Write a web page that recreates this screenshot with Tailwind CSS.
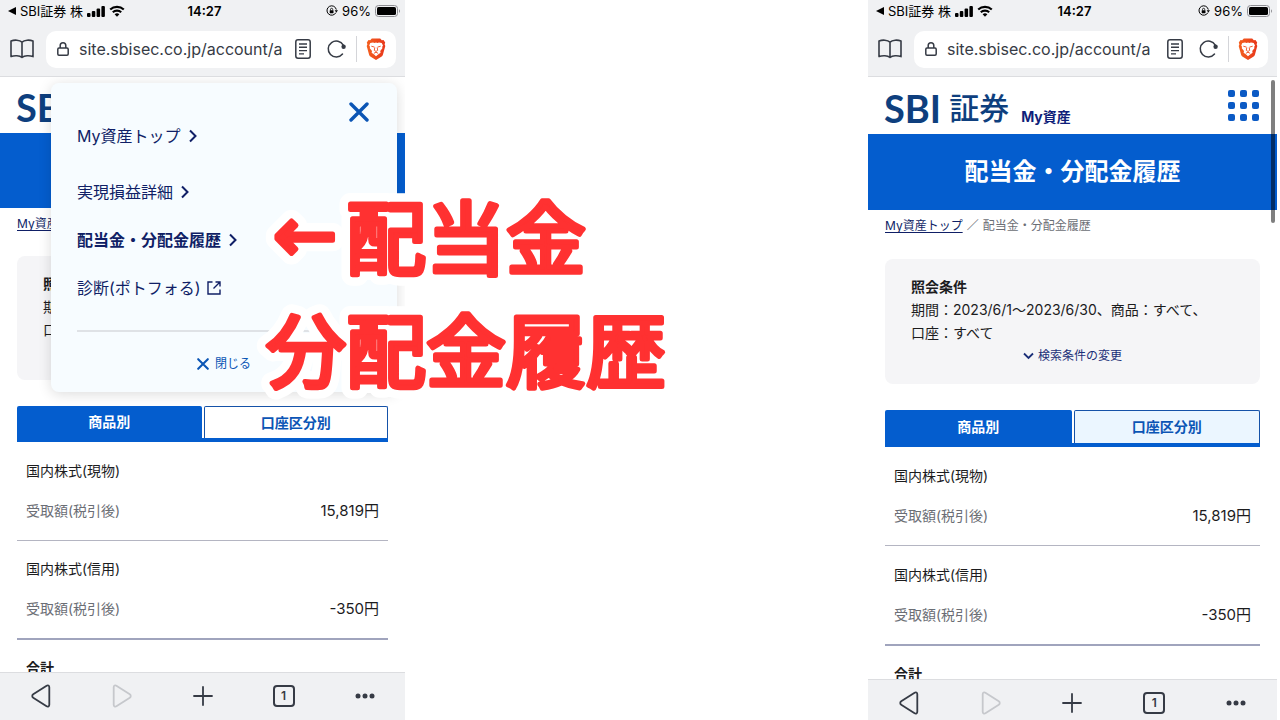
<!DOCTYPE html>
<html lang="ja">

<head>
  <meta charset="UTF-8">
  <meta name="viewport" content="width=device-width, initial-scale=1.0">
  <title>配当金・分配金履歴</title>
  <script src="https://cdn.jsdelivr.net/npm/@tailwindcss/browser@4"></script>
</head>

<body class="font-[Inter,'Noto_Sans_CJK_JP',sans-serif] bg-white text-[#1c1c1e]">
  <!-- Shared icons -->
  <svg class="absolute w-0 h-0" aria-hidden="true">
    <linearGradient id="flame" x1="0" y1="0" x2="1" y2="0">
      <stop offset="0" stop-color="#f4601f" />
      <stop offset="1" stop-color="#e8371b" />
    </linearGradient>
    <symbol id="signal" viewBox="0 0 18 11">
      <rect x="0" y="7" width="3.500" height="4" rx="1" />
      <rect x="4.800" y="5" width="3.500" height="6" rx="1" />
      <rect x="9.600" y="2.500" width="3.500" height="8.500" rx="1" />
      <rect x="14.400" y="0" width="3.500" height="11" rx="1" />
    </symbol>
    <symbol id="wifi" viewBox="0 0 16 12">
      <path d="M1.2 4.6a9.8 9.8 0 0 1 13.6 0M3.8 7.3a6 6 0 0 1 8.4 0" fill="none" stroke="currentColor" stroke-width="2.1" />
      <path d="M5.6 9.3a3.5 3.5 0 0 1 4.8 0L8 11.8z" />
    </symbol>
    <symbol id="rotation" viewBox="0 0 12 12">
      <path d="M9.9 7.6A4.7 4.7 0 1 1 10.3 4.6" fill="none" stroke="currentColor" stroke-width="1" />
      <path d="M8.600 5.200h3.400l-1.700 2.300z" />
      <rect x="3.700" y="5.200" width="3.800" height="3" rx=".4" />
      <path d="M4.500 5.300V4.400a1.100 1.100 0 0 1 2.200 0v.9" fill="none" stroke="currentColor" stroke-width=".8" />
    </symbol>
    <symbol id="battery" viewBox="0 0 26 12">
      <rect x=".5" y=".5" width="22" height="11" rx="3" fill="none" stroke="#8e8e93" />
      <rect x="2" y="2" width="19" height="8" rx="1.600" />
      <path d="M24 4.200c1.300.5 1.300 3.100 0 3.600z" fill="#8e8e93" />
    </symbol>
    <symbol id="book" viewBox="0 0 24 20">
      <path d="M12 3.200C9.500.8 4.500.6 1 2v15.600c3.500-1.400 8.500-1.200 11 .9 2.500-2.100 7.500-2.300 11-.9V2C19.500.6 14.500.8 12 3.200zV18.500" fill="none" stroke="currentColor" stroke-width="1.600" stroke-linejoin="round" />
    </symbol>
    <symbol id="lock" viewBox="0 0 12 14">
      <rect x=".8" y="6" width="10.400" height="7.200" rx="1.200" fill="none" stroke="currentColor" stroke-width="1.500" />
      <path d="M3.200 6V3.600a2.800 2.800 0 0 1 5.600 0V6" fill="none" stroke="currentColor" stroke-width="1.500" />
    </symbol>
    <symbol id="reader" viewBox="0 0 16 20">
      <rect x=".8" y=".8" width="14.400" height="18.400" rx="2.200" fill="none" stroke="currentColor" stroke-width="1.500" />
      <path d="M4 5h8M4 8.300h8M4 11.600h8M4 14.900h5" stroke="currentColor" stroke-width="1.400" />
    </symbol>
    <symbol id="reload" viewBox="0 0 20 20">
      <path d="M15.500 15A8 8 0 1 1 16.300 6.200" fill="none" stroke="currentColor" stroke-width="1.500" stroke-linecap="round" />
      <circle cx="16.600" cy="7.800" r="2.200" />
    </symbol>
    <symbol id="brave" viewBox="0 0 20 22">
      <path d="M5.800.5h8.400l1.600 1.700 1.700-.2L19.200 4.500l-.6 1.700.7 1.900-2.400 8.600c-.3 1-.8 1.600-1.600 2.100L10 22l-5.300-3.200c-.8-.5-1.300-1.100-1.600-2.100L.7 8.100l.7-1.900-.6-1.700L2.500 2l1.700.2z" fill="url(#flame)" />
      <path d="M4.300 5 7 4.600l1.600.4L10 4.500l1.400.5 1.600-.4 2.700.4 1.300 2.500-.8 1.200.2 1.600-2.200 2.700.4 1.800-2.500 1.700L10 18.200l-1.900-1.700-2.500-1.700.4-1.800-2.200-2.700.2-1.600-.8-1.200z" fill="#fff" />
      <path d="m5.300 8.200 3.200.9M14.700 8.200l-3.200.9M8.800 9.500l-.5 2.800L10 13.500l1.700-1.200-.5-2.800M7.900 15.300l2.100-1.100 2.100 1.100" fill="none" stroke="#ee4a1d" stroke-width=".9" />
    </symbol>
    <symbol id="back" viewBox="0 0 20 24">
      <path d="M15.600 1.700 2.200 10.300a2 2 0 0 0 0 3.400L15.600 22.300c1.300.8 2.700.1 2.700-1.500V3.200c0-1.600-1.400-2.300-2.700-1.500z" fill="none" stroke="currentColor" stroke-width="1.800" stroke-linejoin="round" />
    </symbol>
    <symbol id="plus" viewBox="0 0 20 20">
      <path d="M10 1v18M1 10h18" stroke="currentColor" stroke-width="1.800" stroke-linecap="round" />
    </symbol>
    <symbol id="dots" viewBox="0 0 20 6">
      <circle cx="3" cy="3" r="2.500" />
      <circle cx="10" cy="3" r="2.500" />
      <circle cx="17" cy="3" r="2.500" />
    </symbol>
    <symbol id="cross" viewBox="0 0 20 20">
      <path d="m2 2 16 16M18 2 2 18" stroke="currentColor" stroke-width="3.400" stroke-linecap="round" />
    </symbol>
    <symbol id="chevron" viewBox="0 0 8 14">
      <path d="m1 1.500 5.500 5.500L1 12.500" fill="none" stroke="currentColor" stroke-width="2" />
    </symbol>
    <symbol id="external" viewBox="0 0 14 14">
      <path d="M5.500 1H1v12h12V8.500M8.500 1H13v4.500M13 1 6.500 7.500" fill="none" stroke="currentColor" stroke-width="1.400" />
    </symbol>
    <symbol id="menu" viewBox="0 0 32 32">
      <rect x="0" y="0" width="7" height="7" rx="2" /><rect x="12" y="0" width="7" height="7" rx="2" /><rect x="24" y="0" width="7" height="7" rx="2" />
      <rect x="0" y="12" width="7" height="7" rx="2" /><rect x="12" y="12" width="7" height="7" rx="2" /><rect x="24" y="12" width="7" height="7" rx="2" />
      <rect x="0" y="24" width="7" height="7" rx="2" /><rect x="12" y="24" width="7" height="7" rx="2" /><rect x="24" y="24" width="7" height="7" rx="2" />
    </symbol>
  </svg>

  <div class="relative grid grid-cols-[405fr_463fr_409fr_3fr] h-screen overflow-hidden">

    <!-- Phone with the menu open -->
    <section class="flex flex-col min-w-0 min-h-0">
      <header class="bg-[#f0f1f3] border-b border-[#dcdde0] text-[#363b45]">
        <div class="grid grid-cols-[1fr_auto_1fr] items-center h-[22px] pl-2 pr-1 text-[13px] leading-5 text-black fill-current">
          <div class="flex items-center gap-1">
            <svg class="w-2 h-2" viewBox="0 0 8 8"><path d="M8 0v8L0 4z" /></svg>
            <span class="whitespace-nowrap">SBI証券 株</span>
            <svg class="w-[18px] h-[11px]"><use href="#signal" /></svg>
            <svg class="w-4 h-3"><use href="#wifi" /></svg>
          </div>
          <span class="font-semibold">14:27</span>
          <div class="flex items-center justify-end gap-1">
            <svg class="w-3 h-3"><use href="#rotation" /></svg>
            <span>96%</span>
            <svg class="w-[26px] h-3"><use href="#battery" /></svg>
          </div>
        </div>
        <div class="flex items-center gap-3 h-[54px] pl-[10px] pr-[9px]">
          <button aria-label="ブックマーク"><svg class="block w-6 h-5"><use href="#book" /></svg></button>
          <div class="flex flex-1 min-w-0 items-center h-[37px] rounded-[10px] bg-white pl-[11px] pr-[10px] fill-current">
            <svg class="shrink-0 w-3 h-[14px]"><use href="#lock" /></svg>
            <input aria-label="アドレス" value="site.sbisec.co.jp/account/assets" class="flex-1 min-w-0 ml-[10px] mr-3 text-base outline-none">
            <button aria-label="リーダー"><svg class="block w-4 h-5"><use href="#reader" /></svg></button>
            <button aria-label="再読み込み" class="ml-4"><svg class="block w-5 h-5"><use href="#reload" /></svg></button>
            <span class="w-px h-[26px] bg-[#d4d5d9] mx-[9px]"></span>
            <button aria-label="Brave"><svg class="block w-5 h-[22px]"><use href="#brave" /></svg></button>
          </div>
        </div>
      </header>

      <main class="relative flex-1 min-h-0 overflow-hidden">
        <div class="flex h-14 items-center pl-4">
          <div class="flex items-center gap-2 pt-1 text-[#0e3f7e]">
            <span class="font-[Lato] font-bold text-[38px] leading-none">SBI</span>
            <span class="font-medium text-[30px] leading-none">証券</span>
          </div>
        </div>
        <h1 class="h-[75px] bg-[#045dce] text-white font-bold text-2xl leading-[75px] text-center">配当金・分配金履歴</h1>
        <div class="px-[17px]">
          <p class="h-12 pt-[7px] text-xs leading-[18px]"><a href="#" class="text-[#0f1f66] underline underline-offset-2">My資産トップ</a></p>
          <div class="h-[124px] rounded-lg bg-[#f5f5f7] px-[26px] pt-4 text-sm leading-[23px]">
            <h2 class="font-bold">照会条件</h2>
            <p>期間：2023/6/1～2023/6/30、商品：すべて、</p>
            <p>口座：すべて</p>
          </div>
          <div class="grid grid-cols-2 gap-[2px] h-9 mt-[26px] border-b-4 border-[#045dce] text-sm font-bold">
            <button class="rounded-t-[2px] bg-[#045dce] text-white">商品別</button>
            <button class="rounded-t-[2px] border border-b-0 border-[#1552a8] text-[#0b55b5]">口座区分別</button>
          </div>
          <dl class="text-sm leading-6">
            <div class="border-b border-[#b4b5c2] px-[9px] py-[17px]">
              <dt>国内株式(現物)</dt>
              <dd class="flex justify-between mt-4"><span class="text-[#6b6e75]">受取額(税引後)</span><span class="text-[15px]">15,819円</span></dd>
            </div>
            <div class="border-b-2 border-[#a0a4bd] px-[9px] pt-4 pb-[17px]">
              <dt>国内株式(信用)</dt>
              <dd class="flex justify-between mt-4"><span class="text-[#6b6e75]">受取額(税引後)</span><span class="text-[15px]">-350円</span></dd>
            </div>
            <div class="px-[9px] pt-4">
              <dt class="font-bold">合計</dt>
            </div>
          </dl>
        </div>

        <!-- Menu over the page -->
        <nav class="absolute top-[6px] left-[51px] right-2 h-[309px] rounded-lg bg-[#f7fcff] shadow-[0_2px_14px_rgba(0,0,0,0.14)] px-[26px] pt-[41px] text-base leading-6 text-[#101f66]">
          <button aria-label="メニューを閉じる" class="absolute top-[19px] right-7 text-[#0b55b5]"><svg class="block w-5 h-5"><use href="#cross" /></svg></button>
          <a href="#" class="flex items-center gap-2">My資産トップ<svg class="w-2 h-[14px]"><use href="#chevron" /></svg></a>
          <a href="#" class="flex items-center gap-2 mt-8">実現損益詳細<svg class="w-2 h-[14px]"><use href="#chevron" /></svg></a>
          <a href="#" class="flex items-center gap-2 mt-6 font-bold">配当金・分配金履歴<svg class="w-2 h-[14px]"><use href="#chevron" /></svg></a>
          <a href="#" class="flex items-center gap-[6px] mt-6">診断(ポトフォる)<svg class="w-[14px] h-[14px]"><use href="#external" /></svg></a>
          <hr class="mt-[30px] border-[#dfe2e6] border-t-2">
          <button class="flex items-center gap-[6px] mx-auto mt-5 text-xs leading-6 text-[#0b55b5]"><svg class="w-3 h-3"><use href="#cross" /></svg>閉じる</button>
        </nav>
      </main>

      <footer class="h-12 bg-[#f0f1f3] border-t border-[#dcdde0] text-[#363b45]">
        <div class="grid grid-cols-5 h-[46px] items-center justify-items-center fill-current">
          <button aria-label="戻る"><svg class="block w-5 h-6"><use href="#back" /></svg></button>
          <button aria-label="進む" class="text-[#c6c8cc] rotate-180"><svg class="block w-5 h-6"><use href="#back" /></svg></button>
          <button aria-label="新規タブ"><svg class="block w-5 h-5"><use href="#plus" /></svg></button>
          <button class="w-[22px] h-[22px] rounded-[4px] border-2 border-current text-xs leading-none font-semibold">1</button>
          <button aria-label="その他"><svg class="block w-5 h-[6px]"><use href="#dots" /></svg></button>
        </div>
      </footer>
    </section>

    <!-- Phone with the history page -->
    <section class="flex flex-col min-w-0 min-h-0 col-start-3">
      <header class="bg-[#f0f1f3] border-b border-[#dcdde0] text-[#363b45]">
        <div class="grid grid-cols-[1fr_auto_1fr] items-center h-[22px] pl-2 pr-1 text-[13px] leading-5 text-black fill-current">
          <div class="flex items-center gap-1">
            <svg class="w-2 h-2" viewBox="0 0 8 8"><path d="M8 0v8L0 4z" /></svg>
            <span class="whitespace-nowrap">SBI証券 株</span>
            <svg class="w-[18px] h-[11px]"><use href="#signal" /></svg>
            <svg class="w-4 h-3"><use href="#wifi" /></svg>
          </div>
          <span class="font-semibold">14:27</span>
          <div class="flex items-center justify-end gap-1">
            <svg class="w-3 h-3"><use href="#rotation" /></svg>
            <span>96%</span>
            <svg class="w-[26px] h-3"><use href="#battery" /></svg>
          </div>
        </div>
        <div class="flex items-center gap-3 h-[54px] pl-[10px] pr-[9px]">
          <button aria-label="ブックマーク"><svg class="block w-6 h-5"><use href="#book" /></svg></button>
          <div class="flex flex-1 min-w-0 items-center h-[37px] rounded-[10px] bg-white pl-[11px] pr-[10px] fill-current">
            <svg class="shrink-0 w-3 h-[14px]"><use href="#lock" /></svg>
            <input aria-label="アドレス" value="site.sbisec.co.jp/account/assets" class="flex-1 min-w-0 ml-[10px] mr-4 text-base outline-none">
            <button aria-label="リーダー"><svg class="block w-4 h-5"><use href="#reader" /></svg></button>
            <button aria-label="再読み込み" class="ml-4"><svg class="block w-5 h-5"><use href="#reload" /></svg></button>
            <span class="w-px h-[26px] bg-[#d4d5d9] mx-[9px]"></span>
            <button aria-label="Brave"><svg class="block w-5 h-[22px]"><use href="#brave" /></svg></button>
          </div>
        </div>
      </header>

      <main class="relative flex-1 min-h-0 overflow-hidden">
        <div class="flex h-[57px] items-center justify-between pl-4 pr-[17px]">
          <div class="flex items-center gap-2 pt-1 text-[#0e3f7e]">
            <span class="font-[Lato] font-bold text-[38px] leading-none">SBI</span>
            <span class="font-medium text-[30px] leading-none">証券</span>
            <span class="self-end ml-1 text-sm leading-5 font-bold text-[#101f7a]">My資産</span>
          </div>
          <button aria-label="メニュー" class="text-[#0b5ac5] fill-current"><svg class="block w-8 h-8"><use href="#menu" /></svg></button>
        </div>
        <h1 class="h-[76px] bg-[#045dce] text-white font-bold text-2xl leading-[76px] text-center">配当金・分配金履歴</h1>
        <div class="px-[17px]">
          <p class="flex gap-1 h-[49px] pt-[7px] text-xs leading-[18px] text-[#6b6e75]"><a href="#" class="text-[#0f1f66] underline underline-offset-2">My資産トップ</a><span>／</span><span>配当金・分配金履歴</span></p>
          <div class="h-[125px] rounded-lg bg-[#f5f5f7] px-[26px] pt-4 text-sm leading-[23px]">
            <h2 class="font-bold">照会条件</h2>
            <p class="whitespace-nowrap">期間：2023/6/1～2023/6/30、商品：すべて、</p>
            <p>口座：すべて</p>
            <button class="flex items-center gap-1 mx-auto text-xs leading-6 text-[#1b2f78]">
              <svg class="w-[11px] h-2" viewBox="0 0 11 8"><path d="m1 1.500 4.500 4.500L10 1.500" fill="none" stroke="currentColor" stroke-width="1.800" /></svg>検索条件の変更
            </button>
          </div>
          <div class="grid grid-cols-2 gap-[2px] h-[37px] mt-[26px] border-b-4 border-[#045dce] text-sm font-bold">
            <button class="rounded-t-[2px] bg-[#045dce] text-white">商品別</button>
            <button class="rounded-t-[2px] border border-b-0 border-[#1552a8] bg-[#ebf6ff] text-[#0b55b5]">口座区分別</button>
          </div>
          <dl class="text-sm leading-6">
            <div class="border-b border-[#b4b5c2] px-[9px] py-[17px]">
              <dt>国内株式(現物)</dt>
              <dd class="flex justify-between mt-4"><span class="text-[#6b6e75]">受取額(税引後)</span><span class="text-[15px]">15,819円</span></dd>
            </div>
            <div class="border-b-2 border-[#a0a4bd] px-[9px] py-[17px]">
              <dt>国内株式(信用)</dt>
              <dd class="flex justify-between mt-4"><span class="text-[#6b6e75]">受取額(税引後)</span><span class="text-[15px]">-350円</span></dd>
            </div>
            <div class="px-[9px] pt-4">
              <dt class="font-bold">合計</dt>
            </div>
          </dl>
        </div>
        <span class="absolute top-[3px] right-[2px] w-1 h-[143px] rounded-full bg-black/50"></span>
      </main>

      <footer class="h-[41px] overflow-hidden bg-[#f0f1f3] border-t border-[#dcdde0] text-[#363b45]">
        <div class="grid grid-cols-5 h-[46px] items-center justify-items-center fill-current">
          <button aria-label="戻る"><svg class="block w-5 h-6"><use href="#back" /></svg></button>
          <button aria-label="進む" class="text-[#c6c8cc] rotate-180"><svg class="block w-5 h-6"><use href="#back" /></svg></button>
          <button aria-label="新規タブ"><svg class="block w-5 h-5"><use href="#plus" /></svg></button>
          <button class="w-[22px] h-[22px] rounded-[4px] border-2 border-current text-xs leading-none font-semibold">1</button>
          <button aria-label="その他"><svg class="block w-5 h-[6px]"><use href="#dots" /></svg></button>
        </div>
      </footer>
    </section>

    <!-- Callout over the first phone, red with a white outline under it -->
    <svg class="absolute top-[180px] left-[250px] w-[440px] h-[230px] pointer-events-none" viewBox="0 0 440 230" stroke-linejoin="round">
      <use href="#callout" fill="#fff" stroke="#fff" stroke-width="22" />
      <g fill="#ff3131" stroke="#ff3131" stroke-width="5">
        <g id="callout">
          <text x="23" y="81" class="font-['DejaVu_Sans'] text-[76px]">←</text>
          <text x="96" y="88" class="font-['Noto_Sans_CJK_JP'] font-normal text-[80px]">配当金</text>
          <text x="16" y="201" class="font-['Noto_Sans_CJK_JP'] font-normal text-[80px]">分配金履歴</text>
        </g>
      </g>
    </svg>
  </div>
</body>

</html>
